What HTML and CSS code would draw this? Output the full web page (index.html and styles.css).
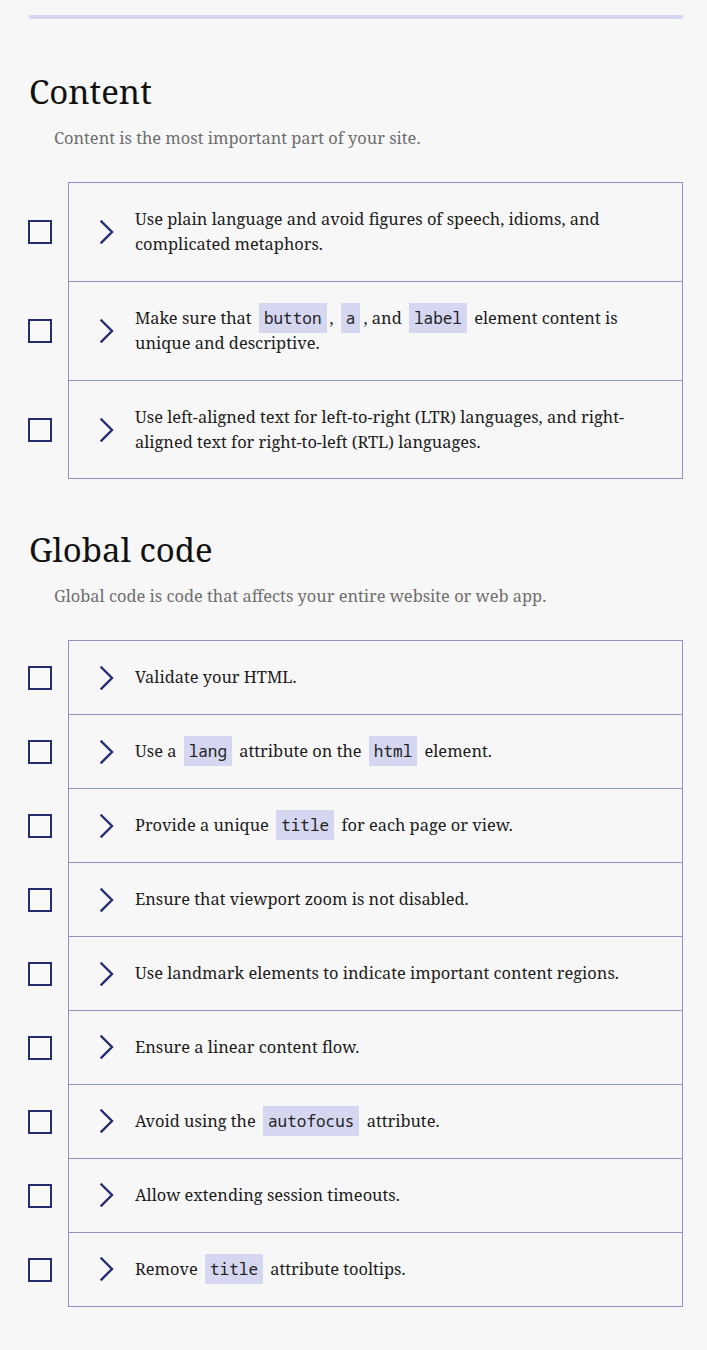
FILE: index.html
```html
<!DOCTYPE html>
<html lang="en">
<head>
<meta charset="utf-8">
<title>Checklist</title>
<link rel="stylesheet" href="styles.css">
</head>
<body>
<main class="page">
  <hr class="rule">

  <section class="section">
    <h2 class="section-title">Content</h2>
    <p class="section-desc">Content is the most important part of your site.</p>
    <ul class="checklist">
      <li class="item">
        <span class="check"></span>
        <div class="row">
          <svg class="chev" viewBox="0 0 16 24" width="16" height="24"><path d="M2.5 1.5 L13 12 L2.5 22.5" /></svg>
          <span class="text">Use plain language and avoid figures of speech, idioms, and complicated metaphors.</span>
        </div>
      </li>
      <li class="item">
        <span class="check"></span>
        <div class="row">
          <svg class="chev" viewBox="0 0 16 24" width="16" height="24"><path d="M2.5 1.5 L13 12 L2.5 22.5" /></svg>
          <span class="text">Make sure that <code>button</code>, <code>a</code>, and <code>label</code> element content is unique and descriptive.</span>
        </div>
      </li>
      <li class="item">
        <span class="check"></span>
        <div class="row">
          <svg class="chev" viewBox="0 0 16 24" width="16" height="24"><path d="M2.5 1.5 L13 12 L2.5 22.5" /></svg>
          <span class="text">Use left-aligned text for left-to-right (LTR) languages, and right-aligned text for right-to-left (RTL) languages.</span>
        </div>
      </li>
    </ul>
  </section>

  <section class="section">
    <h2 class="section-title">Global code</h2>
    <p class="section-desc">Global code is code that affects your entire website or web app.</p>
    <ul class="checklist">
      <li class="item">
        <span class="check"></span>
        <div class="row">
          <svg class="chev" viewBox="0 0 16 24" width="16" height="24"><path d="M2.5 1.5 L13 12 L2.5 22.5" /></svg>
          <span class="text">Validate your HTML.</span>
        </div>
      </li>
      <li class="item">
        <span class="check"></span>
        <div class="row">
          <svg class="chev" viewBox="0 0 16 24" width="16" height="24"><path d="M2.5 1.5 L13 12 L2.5 22.5" /></svg>
          <span class="text">Use a <code>lang</code> attribute on the <code>html</code> element.</span>
        </div>
      </li>
      <li class="item">
        <span class="check"></span>
        <div class="row">
          <svg class="chev" viewBox="0 0 16 24" width="16" height="24"><path d="M2.5 1.5 L13 12 L2.5 22.5" /></svg>
          <span class="text">Provide a unique <code>title</code> for each page or view.</span>
        </div>
      </li>
      <li class="item">
        <span class="check"></span>
        <div class="row">
          <svg class="chev" viewBox="0 0 16 24" width="16" height="24"><path d="M2.5 1.5 L13 12 L2.5 22.5" /></svg>
          <span class="text">Ensure that viewport zoom is not disabled.</span>
        </div>
      </li>
      <li class="item">
        <span class="check"></span>
        <div class="row">
          <svg class="chev" viewBox="0 0 16 24" width="16" height="24"><path d="M2.5 1.5 L13 12 L2.5 22.5" /></svg>
          <span class="text">Use landmark elements to indicate important content regions.</span>
        </div>
      </li>
      <li class="item">
        <span class="check"></span>
        <div class="row">
          <svg class="chev" viewBox="0 0 16 24" width="16" height="24"><path d="M2.5 1.5 L13 12 L2.5 22.5" /></svg>
          <span class="text">Ensure a linear content flow.</span>
        </div>
      </li>
      <li class="item">
        <span class="check"></span>
        <div class="row">
          <svg class="chev" viewBox="0 0 16 24" width="16" height="24"><path d="M2.5 1.5 L13 12 L2.5 22.5" /></svg>
          <span class="text">Avoid using the <code>autofocus</code> attribute.</span>
        </div>
      </li>
      <li class="item">
        <span class="check"></span>
        <div class="row">
          <svg class="chev" viewBox="0 0 16 24" width="16" height="24"><path d="M2.5 1.5 L13 12 L2.5 22.5" /></svg>
          <span class="text">Allow extending session timeouts.</span>
        </div>
      </li>
      <li class="item">
        <span class="check"></span>
        <div class="row">
          <svg class="chev" viewBox="0 0 16 24" width="16" height="24"><path d="M2.5 1.5 L13 12 L2.5 22.5" /></svg>
          <span class="text">Remove <code>title</code> attribute tooltips.</span>
        </div>
      </li>
    </ul>
  </section>
</main>
</body>
</html>
```

FILE: styles.css
```css
html, body {
  margin: 0;
  padding: 0;
  background: #f7f7f7;
}

body {
  font-family: "Noto Serif", "DejaVu Serif", "Liberation Serif", serif;
  color: #1b1b1b;
}

.page {
  padding: 15px 24px 45px 28px;
}

.rule {
  margin: 0 0 0 1px;
  height: 4px;
  border: 0;
  background: #d5d7f1;
}

.section {
  margin-top: 53px;
}

.section + .section {
  margin-top: 51px;
}

.section-title {
  margin: 0;
  font-size: 33px;
  font-weight: 400;
  line-height: 40px;
  color: #111;
  padding-left: 1px;
}

.section-desc {
  margin: 14px 0 0 26px;
  font-size: 16.4px;
  line-height: 24px;
  color: #6e6e6e;
}

.checklist {
  list-style: none;
  margin: 32px 0 0 0;
  padding: 0;
}

.item {
  display: flex;
  align-items: center;
  gap: 16px;
}

.check {
  flex: none;
  width: 20px;
  height: 20px;
  border: 2px solid #252c6c;
  background: #f9f9f9;
}

.row {
  flex: 1;
  display: flex;
  align-items: center;
  gap: 20px;
  padding: 24px 32px 24px 30px;
  border: 1px solid #8e93c2;
  border-top: 0;
}

.item:first-child .row {
  border-top: 1px solid #8e93c2;
}

.chev {
  flex: none;
  fill: none;
  stroke: #262d70;
  stroke-width: 2.4;
  stroke-linecap: square;
}

.text {
  font-size: 16.4px;
  line-height: 24.9px;
}

code {
  font-family: "Noto Sans Mono", "DejaVu Sans Mono", "Liberation Mono", monospace;
  font-size: 16px;
  line-height: 1;
  background: #d5d7f1;
  padding: 4px 5px;
  margin: 0 3px;
  color: #222;
}
```
